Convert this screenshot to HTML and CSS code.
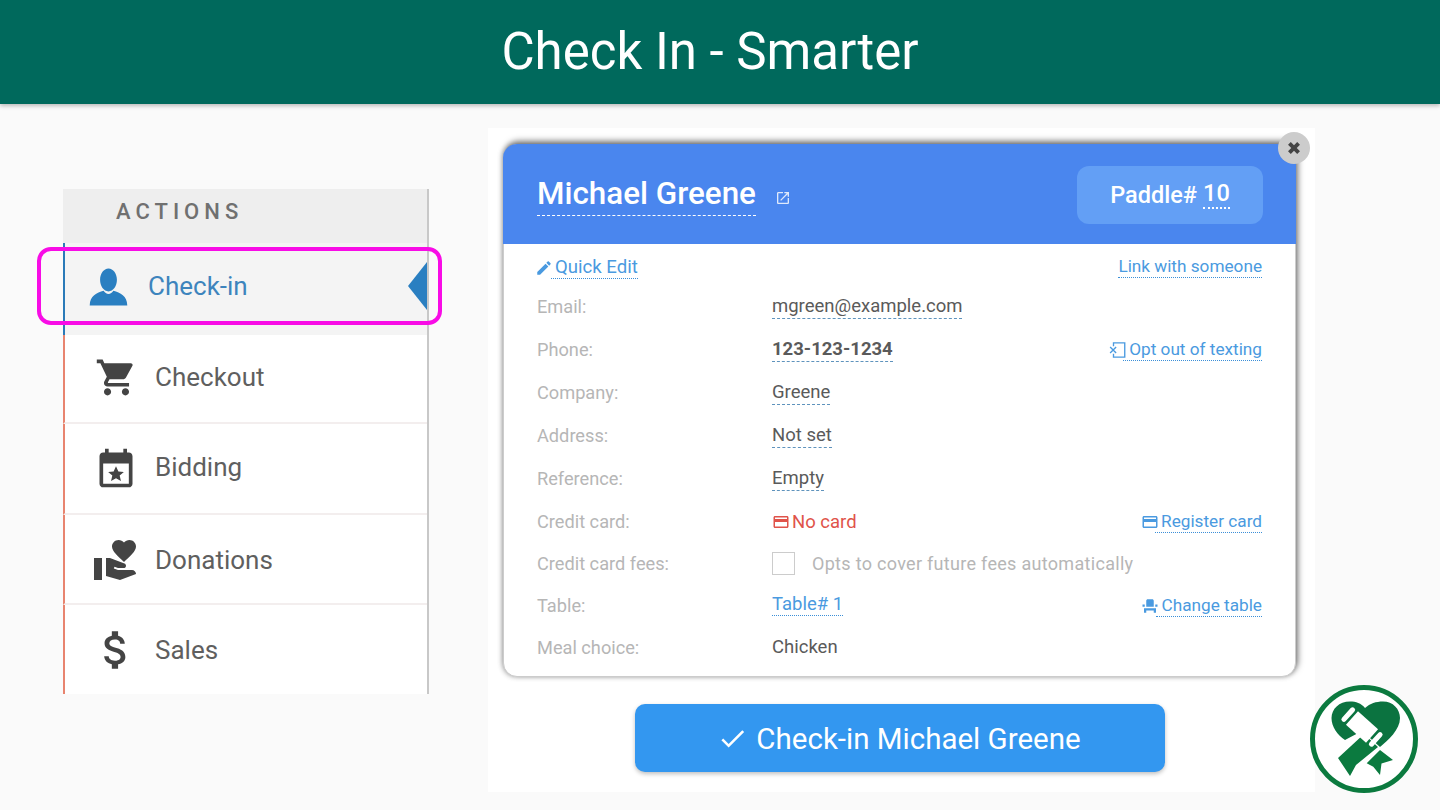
FILE: index.html
```html
<!DOCTYPE html>
<html lang="en">
<head>
    <meta charset="UTF-8">
    <meta name="viewport" content="width=device-width, initial-scale=1.0">
    <title>Check In - Smarter</title>
    <link rel="stylesheet" href="styles.css">
</head>
<body>
    <header class="topbar">
        <h1>Check In - Smarter</h1>
    </header>

    <main class="stage">
        <!-- actions menu -->
        <nav class="actions">
            <div class="actions-title">ACTIONS</div>
            <a class="action action-active">
                <svg class="action-icon icon-person" viewBox="0 0 24 24"><path d="M12 2.800c2.400 0 4.300 2.600 4.300 5.800S14.400 14.500 12 14.500 7.700 11.800 7.700 8.600 9.600 2.800 12 2.800zM9.500 14.200c.6 1 1.500 1.600 2.500 1.600s1.900-.6 2.500-1.600c3.500 1 7 2.500 7.100 7.500H2.400c.1-5 3.600-6.500 7.100-7.500z"/></svg>
                <span>Check-in</span>
                <i class="action-arrow"></i>
            </a>
            <a class="action action-cart">
                <svg class="action-icon icon-cart" viewBox="0 0 24 24"><path d="M7 18c-1.100 0-1.990.9-1.990 2S5.900 22 7 22s2-.9 2-2-.9-2-2-2zM1 2v2h2l3.600 7.590-1.350 2.450c-.16.28-.25.61-.25.96 0 1.100.9 2 2 2h12v-2H7.420c-.14 0-.25-.11-.25-.25l.03-.12.9-1.630h7.450c.75 0 1.410-.41 1.750-1.030l3.580-6.490c.08-.14.12-.31.12-.48 0-.55-.45-1-1-1H5.210l-.94-2H1zm16 16c-1.100 0-1.990.9-1.990 2s.89 2 1.990 2 2-.9 2-2-.9-2-2-2z"/></svg>
                <span>Checkout</span>
            </a>
            <a class="action action-bid">
                <svg class="action-icon icon-bid" viewBox="0 0 24 24"><path d="M19 20V9H5v11h14zM16 1h2v2h1c1.100 0 2 .9 2 2v15c0 1.100-.9 2-2 2H5c-1.100 0-2-.9-2-2V5c0-1.100.9-2 2-2h1V1h2v2h8V1zM12 10.500l1.300 2.800 3 .3-2.300 2 .7 3-2.700-1.600-2.700 1.600.7-3-2.300-2 3-.3z"/></svg>
                <span>Bidding</span>
            </a>
            <a class="action action-donate">
                <svg class="action-icon icon-donate" viewBox="0 0 24 24"><path d="M1 11h4v11H1zm15-7.750C16.650 2.490 17.660 2 18.700 2 20.550 2 22 3.450 22 5.300c0 2.270-2.910 4.900-6 7.700-3.090-2.810-6-5.440-6-7.700C10 3.450 11.450 2 13.300 2c1.040 0 2.050.49 2.700 1.250zM20 17h-7l-2.090-.73.33-.94L13 16h2.820c.65 0 1.180-.53 1.180-1.180 0-.49-.31-.93-.77-1.110L8.970 11H7v9.020L14 22l8.010-3c-.01-1.100-.9-2-2.010-2z"/></svg>
                <span>Donations</span>
            </a>
            <a class="action action-sales">
                <svg class="action-icon icon-sales" viewBox="0 0 24 24"><path d="M11.800 10.900c-2.270-.59-3-1.200-3-2.150 0-1.090 1.010-1.850 2.700-1.850 1.780 0 2.440.85 2.500 2.100h2.210c-.07-1.720-1.120-3.300-3.210-3.810V3h-3v2.160c-1.940.42-3.500 1.680-3.500 3.610 0 2.310 1.910 3.460 4.700 4.130 2.500.6 3 1.480 3 2.410 0 .69-.49 1.790-2.700 1.790-2.060 0-2.870-.92-2.980-2.100h-2.200c.12 2.190 1.760 3.420 3.680 3.830V21h3v-2.150c1.950-.37 3.500-1.500 3.500-3.550 0-2.840-2.430-3.810-4.700-4.400z"/></svg>
                <span>Sales</span>
            </a>
            <div class="highlight-ring"></div>
        </nav>

        <!-- guest detail -->
        <section class="panel">
            <div class="card">
                <div class="card-head">
                    <span class="guest-name">Michael Greene</span>
                    <svg class="open-icon" viewBox="0 0 24 24"><path d="M19 19H5V5h7V3H5c-1.110 0-2 .9-2 2v14c0 1.100.89 2 2 2h14c1.100 0 2-.9 2-2v-7h-2v7zM14 3v2h3.590l-9.830 9.830 1.410 1.410L19 6.410V10h2V3h-7z"/></svg>
                    <div class="paddle">Paddle# <span class="paddle-num">10</span></div>
                </div>
                <button class="close-btn" aria-label="Close">
                    <svg viewBox="0 0 24 24"><path d="M5.500 8.500l3-3L12 9l3.500-3.500 3 3L15 12l3.500 3.500-3 3L12 15l-3.500 3.500-3-3L9 12z"/></svg>
                </button>

                <div class="card-body">
                    <div class="row row-top">
                        <a class="link-wrap link-quick">
                            <svg class="mini-icon" viewBox="0 0 24 24"><path d="M3 17.250V21h3.750L17.810 9.940l-3.750-3.750L3 17.250zM20.710 7.040c.39-.39.39-1.020 0-1.410l-2.340-2.340c-.39-.39-1.020-.39-1.410 0l-1.830 1.830 3.750 3.750 1.830-1.830z"/></svg>
                            <span class="link">Quick Edit</span>
                        </a>
                        <a class="link-wrap link-right"><span class="link">Link with someone</span></a>
                    </div>
                    <div class="row">
                        <span class="label">Email:</span>
                        <span class="value"><span class="editable">mgreen@example.com</span></span>
                    </div>
                    <div class="row">
                        <span class="label">Phone:</span>
                        <span class="value"><span class="editable strong">123-123-1234</span></span>
                        <a class="link-wrap">
                            <svg class="mini-icon" viewBox="0 0 24 24" fill="none" stroke="currentColor" stroke-width="1.800"><path d="M6 7V2.500h15v19H6V17M1.500 8l8 8M9.500 8l-8 8"/></svg>
                            <span class="link">Opt out of texting</span>
                        </a>
                    </div>
                    <div class="row">
                        <span class="label">Company:</span>
                        <span class="value"><span class="editable">Greene</span></span>
                    </div>
                    <div class="row">
                        <span class="label">Address:</span>
                        <span class="value"><span class="editable">Not set</span></span>
                    </div>
                    <div class="row">
                        <span class="label">Reference:</span>
                        <span class="value"><span class="editable">Empty</span></span>
                    </div>
                    <div class="row">
                        <span class="label">Credit card:</span>
                        <span class="value no-card">
                            <svg class="mini-icon" viewBox="0 0 24 24"><path d="M20 4H4c-1.110 0-1.990.89-1.990 2L2 18c0 1.110.89 2 2 2h16c1.110 0 2-.89 2-2V6c0-1.110-.89-2-2-2zm0 14H4v-6h16v6zm0-10H4V6h16v2z"/></svg>
                            No card
                        </span>
                        <a class="link-wrap">
                            <svg class="mini-icon" viewBox="0 0 24 24"><path d="M20 4H4c-1.110 0-1.990.89-1.990 2L2 18c0 1.110.89 2 2 2h16c1.110 0 2-.89 2-2V6c0-1.110-.89-2-2-2zm0 14H4v-6h16v6zm0-10H4V6h16v2z"/></svg>
                            <span class="link">Register card</span>
                        </a>
                    </div>
                    <div class="row row-tight row-fees">
                        <span class="label">Credit card fees:</span>
                        <span class="value fees"><i class="checkbox"></i>Opts to cover future fees automatically</span>
                    </div>
                    <div class="row row-tight">
                        <span class="label">Table:</span>
                        <span class="value"><span class="link link-plain">Table# 1</span></span>
                        <a class="link-wrap">
                            <svg class="mini-icon" viewBox="0 0 24 24"><path d="M4 18v3h3v-3h10v3h3v-6H4zm15-8h3v3h-3zM2 10h3v3H2zm15 3H7V5c0-1.100.9-2 2-2h6c1.100 0 2 .9 2 2v8z"/></svg>
                            <span class="link">Change table</span>
                        </a>
                    </div>
                    <div class="row row-tight">
                        <span class="label">Meal choice:</span>
                        <span class="value">Chicken</span>
                    </div>
                </div>
            </div>

            <button class="checkin-btn">
                <svg viewBox="0 0 24 24"><path d="M9 16.170L4.830 12l-1.420 1.410L9 19 21 7l-1.410-1.410z"/></svg>
                Check-in Michael Greene
            </button>
        </section>
    </main>

    <!-- brand badge -->
    <svg class="brand" viewBox="0 0 108 108">
        <circle cx="54" cy="54" r="51.500" fill="#fff" stroke="#0b7a3f" stroke-width="5"/>
        <path fill="#0b7340" d="M55 23C51 18 46 16.500 40 16.500 29 16.500 21.500 24 21.500 33c0 9 6 17 13.500 22l17-9 18 16c8-7 20-17 20-29 0-9-7-16.500-17-16.500-7 0-13 2-18 6.500z"/>
        <path fill="#0b7a3f" d="M54 49l14 13-22 18-6 11-12-18z"/>
        <path fill="#0b7a3f" d="M70 65l13 10-11.500 3.500L70 90l-6.700-8.300-6.600-3.400z"/>
        <g transform="rotate(42 52 42)" fill="#fff">
            <rect x="38.500" y="33" width="27" height="18"/>
            <rect x="31" y="33" width="5" height="18" rx="2.500"/>
            <rect x="68" y="33" width="5" height="18" rx="2.500"/>
        </g>
    </svg>
</body>
</html>
```

FILE: styles.css
```css
/* base */
body {
    margin: 0;
    height: 810px;
    overflow: hidden;
    background-color: #fafafa;
    font-family: Roboto, "Liberation Sans", sans-serif;
    position: relative;
}

.topbar {
    height: 104px;
    background-color: #00695c;
    box-shadow: 0 2px 4px rgba(0, 0, 0, 0.25);
    display: flex;
    align-items: center;
    justify-content: center;
    padding: 0 20px 2px 0;
    box-sizing: border-box;
}

.topbar h1 {
    margin: 0;
    color: #fff;
    font-size: 51px;
    font-weight: 400;
}

.stage {
    display: flex;
    align-items: flex-start;
    padding: 24px 0 0 63px;
}

/* actions menu */
.actions {
    position: relative;
    width: 366px;
    margin-top: 61px;
    box-sizing: border-box;
    background: #fff;
    border-right: 2px solid #c8c8c8;
}

.actions-title {
    height: 54px;
    padding-left: 53px;
    background: #eee;
    color: #707070;
    font-size: 22px;
    font-weight: 500;
    letter-spacing: 5px;
    line-height: 46px;
}

.action {
    display: grid;
    grid-template-columns: 50px 1fr;
    column-gap: 14px;
    align-items: center;
    padding-left: 26px;
    box-sizing: border-box;
    border-left: 2px solid #e8846f;
    border-bottom: 2px solid #f3eeee;
    color: #5f5f5f;
    font-size: 26px;
    position: relative;
}

.action-icon {
    justify-self: center;
    fill: #444;
}

.icon-person { width: 47px; height: 47px; fill: #2a7fc1; }
.icon-cart { width: 43px; height: 43px; }
.icon-bid { width: 44px; height: 44px; margin-top: 4px; }
.icon-donate { width: 48px; height: 48px; }
.icon-sales { width: 50px; height: 50px; }

.action-active {
    height: 92px;
    padding: 0 0 6px 18px;
    column-gap: 15px;
    background: #f4f4f4;
    border-left-color: #2a7ab8;
    border-bottom: none;
    color: #3d84bd;
}

.action-cart {
    height: 89px;
    padding-bottom: 3px;
}

.action-bid {
    height: 91px;
    padding-bottom: 3px;
}

.action-donate {
    height: 90px;
    padding-top: 1px;
}

.action-sales {
    height: 89px;
    border-bottom: none;
}

.action-arrow {
    position: absolute;
    right: 0;
    top: 19px;
    width: 0;
    height: 0;
    border-top: 24px solid transparent;
    border-bottom: 24px solid transparent;
    border-right: 19px solid #2a7fc1;
}

.highlight-ring {
    position: absolute;
    left: -26px;
    top: 58px;
    width: 405px;
    height: 78px;
    box-sizing: border-box;
    border: 4px solid #f80ce6;
    border-radius: 14px;
}

/* guest panel */
.panel {
    width: 827px;
    height: 664px;
    margin-left: 59px;
    padding: 16px 19px 0 15px;
    box-sizing: border-box;
    background: #fff;
}

.card {
    position: relative;
    height: 533px;
    box-sizing: border-box;
    border-radius: 14px;
    border: 1px solid #ccc;
    background: #fff;
    box-shadow: 2px -3px 6px rgba(0, 0, 0, 0.5), -1px 0 5px rgba(0, 0, 0, 0.25);
}

.card-head {
    height: 100px;
    margin: -1px -1px 0;
    padding: 1px 33px 0 34px;
    box-sizing: border-box;
    display: flex;
    align-items: center;
    background: #4a86ee;
    border-radius: 14px 14px 0 0;
    color: #fff;
}

.guest-name {
    font-size: 31.400px;
    font-weight: 500;
    line-height: 42px;
    border-bottom: 1px dashed #fff;
}

.open-icon {
    width: 16px;
    height: 16px;
    margin: 6px 0 0 19px;
    fill: #dfe9fb;
}

.paddle {
    margin-left: auto;
    width: 186px;
    height: 58px;
    background: #639ff5;
    border-radius: 12px;
    display: flex;
    align-items: center;
    justify-content: center;
    gap: 6px;
    font-size: 23.500px;
    font-weight: 500;
    box-sizing: border-box;
}

.paddle-num {
    line-height: 27px;
    border-bottom: 2px dotted #fff;
}

.close-btn {
    position: absolute;
    right: -15px;
    top: -13px;
    width: 32px;
    height: 32px;
    padding: 5px;
    border: none;
    border-radius: 50%;
    background: #ccc;
}

.close-btn svg {
    display: block;
    width: 22px;
    height: 22px;
    fill: #444;
}

.card-body {
    padding: 0 33px;
}

.row {
    height: 43px;
    display: flex;
    align-items: center;
    font-size: 18.200px;
}

.row-tight {
    height: 42px;
}

.row-fees {
    margin-top: -1px;
}

.row-top {
    justify-content: space-between;
    margin-bottom: -2px;
    padding-top: 3px;
    box-sizing: border-box;
}

.label {
    width: 235px;
    flex: none;
    color: #b6b6b6;
}

.value {
    color: #5a5a5a;
    font-size: 18.500px;
    display: flex;
    align-items: center;
}

.editable {
    line-height: 24px;
    border-bottom: 1px dashed #5f93bd;
}

.strong {
    font-weight: 700;
}

.no-card {
    color: #e0534a;
    fill: #e0534a;
    gap: 2px;
}

.fees {
    color: #b6b6b6;
    font-size: 18px;
    letter-spacing: 0.300px;
}

.checkbox {
    width: 21px;
    height: 21px;
    margin-right: 17px;
    border: 1px solid #ccc;
}

.link-wrap {
    margin-left: auto;
    padding-top: 1px;
    display: flex;
    align-items: center;
    color: #4a9ae0;
    fill: #4a9ae0;
    font-size: 17.200px;
}

.link-wrap .mini-icon {
    margin-right: -3.500px;
}

.link-wrap .link {
    padding-left: 6px;
}

.link-right {
    padding-top: 0;
}

.link-right .link {
    padding-left: 0;
}

.row-top .link-quick {
    margin: 2px 0 0 -2px;
    padding-top: 0;
    font-size: 18.600px;
}

.row-top .link-quick .mini-icon {
    margin-right: -2px;
}

.row-top .link-quick .link {
    padding-left: 4px;
}

.link {
    color: #4a9ae0;
    line-height: 21px;
    border-bottom: 1px dotted #3b8fd8;
}

.mini-icon {
    width: 18px;
    height: 18px;
    flex: none;
}

.checkin-btn {
    width: 530px;
    height: 68px;
    margin: 27px 0 0 132px;
    padding: 1px 2px 0 0;
    display: flex;
    align-items: center;
    justify-content: center;
    gap: 8px;
    border: none;
    border-radius: 10px;
    background: #3397f0;
    box-shadow: 0 2px 4px rgba(0, 0, 0, 0.25);
    color: #fff;
    font-family: inherit;
    font-size: 29.500px;
}

.checkin-btn svg {
    width: 31px;
    height: 31px;
    fill: #fff;
}

.brand {
    position: absolute;
    left: 1310px;
    top: 685px;
    width: 108px;
    height: 108px;
}
```
